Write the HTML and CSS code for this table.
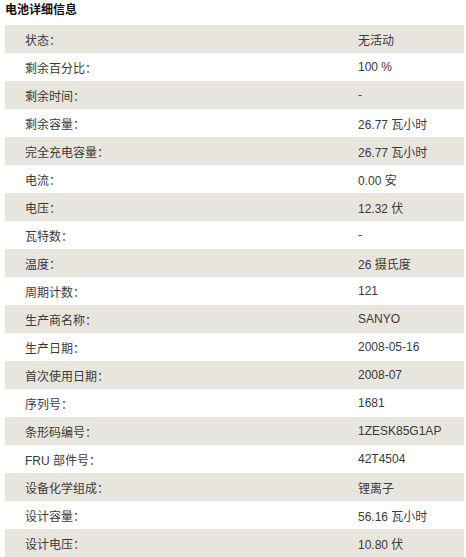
FILE: index.html
```html
<!DOCTYPE html>
<html lang="zh">
<head>
<meta charset="utf-8">
<title>电池详细信息</title>
<link rel="stylesheet" href="styles.css">
</head>
<body>
<div class="panel">
  <h1 class="title">电池详细信息</h1>
  <div class="list">
    <div class="row alt"><span class="label">状态：</span><span class="value">无活动</span></div>
    <div class="row"><span class="label">剩余百分比：</span><span class="value">100 %</span></div>
    <div class="row alt"><span class="label">剩余时间：</span><span class="value">-</span></div>
    <div class="row"><span class="label">剩余容量：</span><span class="value">26.77 瓦小时</span></div>
    <div class="row alt"><span class="label">完全充电容量：</span><span class="value">26.77 瓦小时</span></div>
    <div class="row"><span class="label">电流：</span><span class="value">0.00 安</span></div>
    <div class="row alt"><span class="label">电压：</span><span class="value">12.32 伏</span></div>
    <div class="row"><span class="label">瓦特数：</span><span class="value">-</span></div>
    <div class="row alt"><span class="label">温度：</span><span class="value">26 摄氏度</span></div>
    <div class="row"><span class="label">周期计数：</span><span class="value">121</span></div>
    <div class="row alt"><span class="label">生产商名称：</span><span class="value">SANYO</span></div>
    <div class="row"><span class="label">生产日期：</span><span class="value">2008-05-16</span></div>
    <div class="row alt"><span class="label">首次使用日期：</span><span class="value">2008-07</span></div>
    <div class="row"><span class="label">序列号：</span><span class="value">1681</span></div>
    <div class="row alt"><span class="label">条形码编号：</span><span class="value">1ZESK85G1AP</span></div>
    <div class="row"><span class="label">FRU 部件号：</span><span class="value">42T4504</span></div>
    <div class="row alt"><span class="label">设备化学组成：</span><span class="value">锂离子</span></div>
    <div class="row"><span class="label">设计容量：</span><span class="value">56.16 瓦小时</span></div>
    <div class="row alt"><span class="label">设计电压：</span><span class="value">10.80 伏</span></div>
  </div>
</div>
</body>
</html>
```
FILE: styles.css
```css
html, body {
  margin: 0;
  padding: 0;
  background: #ffffff;
}
body {
  font-family: "Liberation Sans", "Noto Sans CJK SC", sans-serif;
  font-size: 12px;
  color: #3a3a3a;
}
.panel {
  padding: 0 2px 0 5px;
}
.title {
  margin: 0;
  height: 25px;
  line-height: 21px;
  font-size: 12px;
  font-weight: bold;
  color: #111111;
  font-family: "Liberation Sans", "Noto Sans CJK SC", sans-serif;
}
.list {
  display: flex;
  flex-direction: column;
}
.row {
  display: grid;
  grid-template-columns: 353px 1fr;
  height: 28px;
  align-items: center;
}
.row.alt {
  background: #e8e5de;
}
.label {
  padding-left: 20px;
}
.value {
  white-space: nowrap;
}
```
